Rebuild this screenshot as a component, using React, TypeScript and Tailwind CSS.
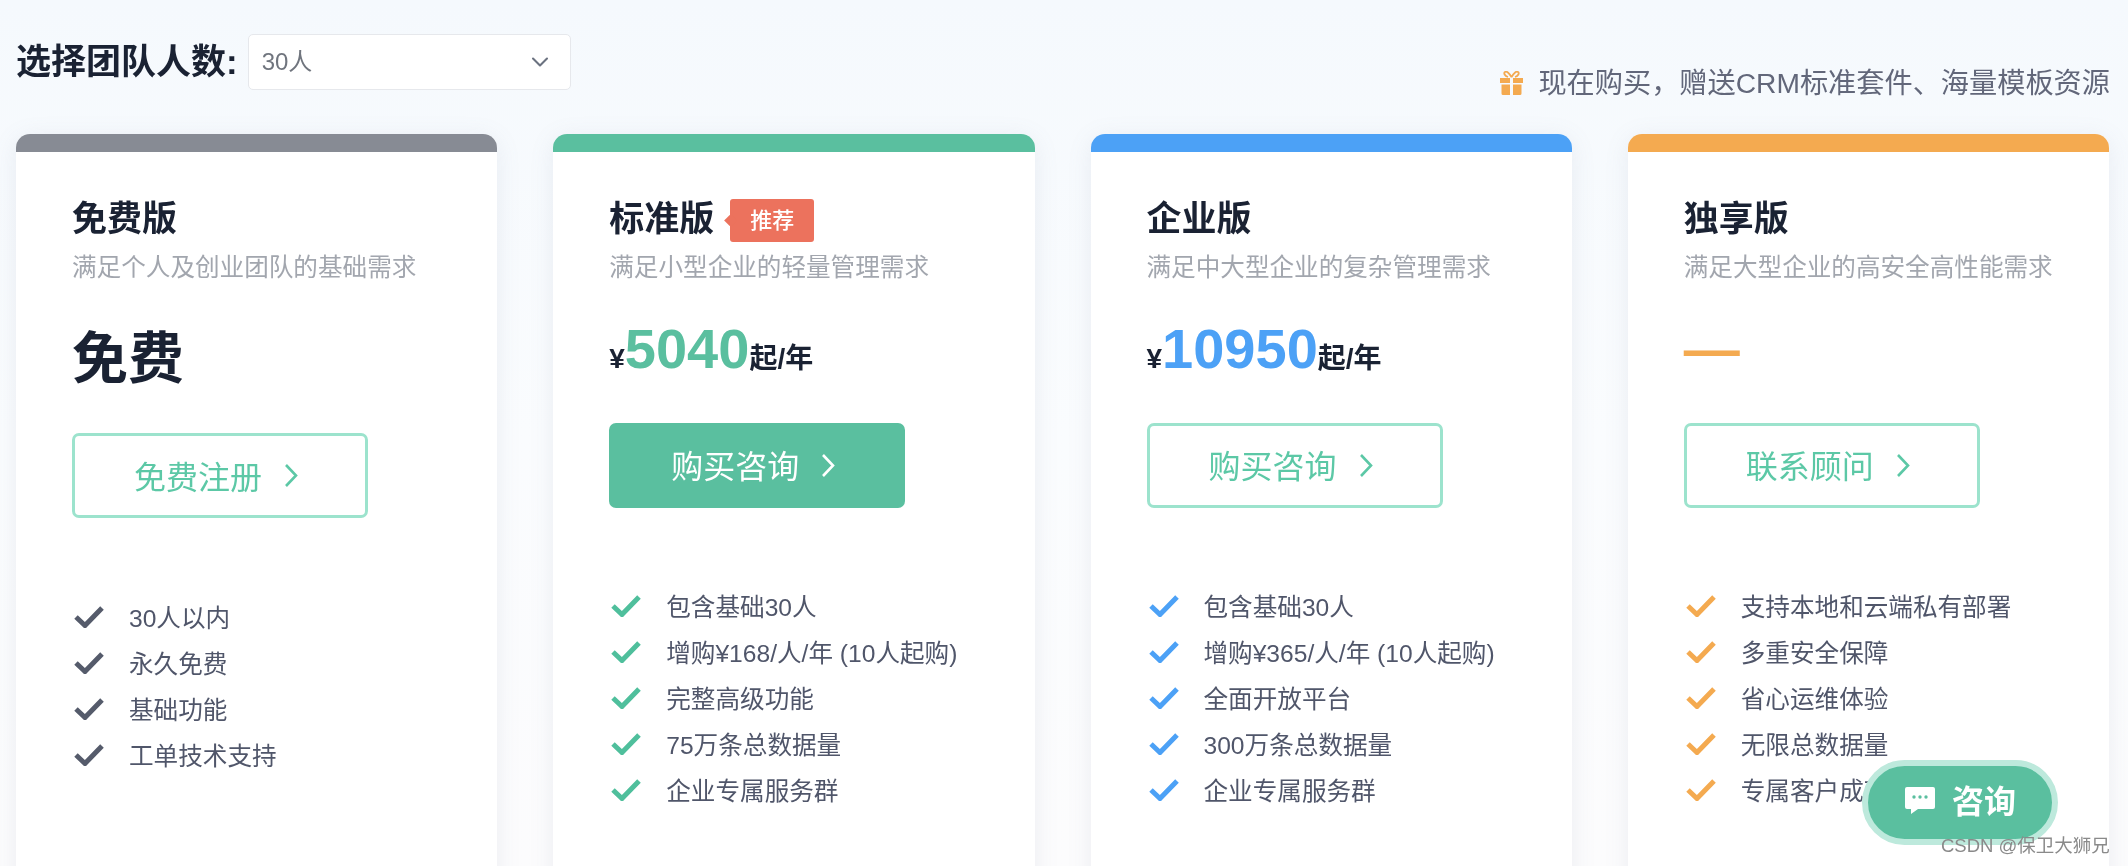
import { ChevronDown } from "lucide-react";

type Plan = {
  name: string;
  desc: string;
  bar: string;
  check: string;
  price: string;
  priceColor?: string;
  action: string;
  solid?: boolean;
  recommend?: boolean;
  items: string[];
};

const plans: Plan[] = [
  {
    name: "免费版",
    desc: "满足个人及创业团队的基础需求",
    bar: "bg-[#878b94]",
    check: "text-[#555b6b]",
    price: "free",
    action: "免费注册",
    items: ["30人以内", "永久免费", "基础功能", "工单技术支持"],
  },
  {
    name: "标准版",
    desc: "满足小型企业的轻量管理需求",
    bar: "bg-[#5abf9f]",
    check: "text-[#4fbf9c]",
    price: "5040",
    priceColor: "text-[#5abf9f]",
    action: "购买咨询",
    solid: true,
    recommend: true,
    items: ["包含基础30人", "增购¥168/人/年 (10人起购)", "完整高级功能", "75万条总数据量", "企业专属服务群"],
  },
  {
    name: "企业版",
    desc: "满足中大型企业的复杂管理需求",
    bar: "bg-[#4ca1f6]",
    check: "text-[#4ca1f6]",
    price: "10950",
    priceColor: "text-[#4ca1f6]",
    action: "购买咨询",
    items: ["包含基础30人", "增购¥365/人/年 (10人起购)", "全面开放平台", "300万条总数据量", "企业专属服务群"],
  },
  {
    name: "独享版",
    desc: "满足大型企业的高安全高性能需求",
    bar: "bg-[#f4aa50]",
    check: "text-[#f4aa50]",
    price: "none",
    action: "联系顾问",
    items: ["支持本地和云端私有部署", "多重安全保障", "省心运维体验", "无限总数据量", "专属客户成功经理"],
  },
];

function CheckMark({ className }: { className: string }) {
  return (
    <svg viewBox="0 0 30 23" className={`w-[30px] h-[23px] shrink-0 -mt-[3px] ${className}`} fill="none">
      <path d="M2 12l9 8.500L28 3" stroke="currentColor" strokeWidth="5" />
    </svg>
  );
}

function Price({ plan }: { plan: Plan }) {
  if (plan.price === "free") {
    return (
      <div className="h-[149px] flex items-center">
        <span className="text-[56px] leading-none font-bold text-[#1a2233]">免费</span>
      </div>
    );
  }
  if (plan.price === "none") {
    return (
      <div className="h-[139px] flex items-center">
        <span className="text-[56px] leading-none font-bold text-[#f4aa50] -mt-[10px]">—</span>
      </div>
    );
  }
  return (
    <div className="h-[139px] flex items-baseline pt-[33px] text-[#1a2233] font-bold">
      <span className="text-[28px] leading-none">¥</span>
      <span className={`text-[56px] leading-[64px] ${plan.priceColor}`}>{plan.price}</span>
      <span className="text-[28px] leading-none">起/年</span>
    </div>
  );
}

function PlanCard({ plan }: { plan: Plan }) {
  const isFree = plan.price === "free";
  return (
    <div className="h-[760px] bg-white rounded-t-[14px] shadow-[0_4px_24px_rgba(120,135,160,0.12)] overflow-hidden">
      <div className={`h-[18px] ${plan.bar}`} />
      <div className="pl-[56px] pt-[45px]">
        <div className="flex items-center h-[44px]">
          <h2 className="text-[35px] leading-[44px] font-bold text-[#1a2233]">{plan.name}</h2>
          {plan.recommend && (
            <span className="relative ml-[16px] mt-[3px] w-[84px] h-[43px] rounded-[3px] bg-[#ec725d] text-white text-[22px] font-medium flex items-center justify-center">
              <span className="absolute -left-[4px] top-[17px] w-[9px] h-[9px] rotate-45 bg-[#ec725d]" />
              <span className="relative">推荐</span>
            </span>
          )}
        </div>
        <p className="mt-[11px] text-[24.6px] leading-[32px] text-[#a2a6ae] whitespace-nowrap">{plan.desc}</p>
        <Price plan={plan} />
        <button
          type="button"
          className={`w-[296px] h-[85px] rounded-[7px] flex items-center justify-center gap-[22px] text-[32px] pr-[8px] ${
            plan.solid
              ? "bg-[#5abf9f] text-white"
              : "bg-white border-[3px] border-[#9ce3cd] text-[#5cc8a6]"
          }`}
        >
          <span className={isFree ? "mt-[5px]" : "mt-[3px]"}>{plan.action}</span>
          <svg viewBox="0 0 14 25" className="w-[14px] h-[25px]" fill="none">
            <path d="M2 2l10 10.500L2 23" stroke="currentColor" strokeWidth="2.600" />
          </svg>
        </button>
        <ul className={isFree ? "mt-[77px]" : "mt-[76px]"}>
          {plan.items.map((item) => (
            <li key={item} className="h-[46px] flex items-center gap-[25px] text-[24.6px] text-[#50566a] pl-[2px]">
              <CheckMark className={plan.check} />
              <span className="whitespace-nowrap mt-[2px]">{item}</span>
            </li>
          ))}
        </ul>
      </div>
    </div>
  );
}

export default function App() {
  return (
    <div className="relative w-[2128px] h-[866px] overflow-hidden bg-gradient-to-b from-[#f5f9fd] via-[#fafcfe] to-[#fcfcfd] blur-[0.5px] font-['Liberation_Sans','Noto_Sans_CJK_SC',sans-serif]">
      <div className="pt-[34px] pl-[16px] pr-[19px]">
        {/* Header */}
        <div className="h-[100px] flex justify-between items-start">
          <div className="flex items-center h-[56px]">
            <span className="text-[35px] font-bold text-[#1a2233] whitespace-nowrap">选择团队人数:</span>
            <div className="ml-[10px] w-[323px] h-[56px] rounded-[5px] border border-[#e6e8ec] bg-white flex items-center justify-between pl-[13px] pr-[16px]">
              <span className="text-[24px] text-[#70757e]">30人</span>
              <ChevronDown size={28} strokeWidth={1.8} className="text-[#6b7280]" />
            </div>
          </div>
          <div className="mt-[29px] -mr-[1px] flex items-center h-[40px] gap-[15px]">
            <svg viewBox="0 0 23 24" className="w-[23px] h-[24px] text-[#f4aa50]" fill="currentColor">
              <path d="M0 7h10v5H0zM13 7h10v5H13zM1.500 13.500H10V24H3a1.500 1.500 0 0 1-1.500-1.500zM13 13.500h8.500v9A1.500 1.500 0 0 1 20 24h-7z" />
              <path d="M11.500 6C9 1.500 6.500 0 5 1s-.5 4 3 5M11.500 6c2.500-4.500 5-6 6.500-5s.5 4-3 5" fill="none" stroke="currentColor" strokeWidth="1.800" />
            </svg>
            <span className="text-[28.2px] leading-[40px] text-[#62677a] whitespace-nowrap">现在购买，赠送CRM标准套件、海量模板资源</span>
          </div>
        </div>

        {/* Plans */}
        <div className="grid grid-cols-4 gap-[56px]">
          {plans.map((plan) => (
            <PlanCard key={plan.name} plan={plan} />
          ))}
        </div>
      </div>

      {/* Floating consult button */}
      <div className="absolute left-[1862px] top-[760px] w-[196px] h-[85px] rounded-full bg-[#5abf9f] border-[6px] border-[#bde9dc] flex items-center justify-center gap-[16px] text-white text-[32px] font-bold">
        <svg viewBox="0 0 32 27" className="w-[32px] h-[27px] -mt-[4px]">
          <path fill="#fff" d="M3 0h26a2 2 0 0 1 2 2v18a2 2 0 0 1-2 2H14l-7 5v-5H3a2 2 0 0 1-2-2V2a2 2 0 0 1 2-2z" />
          <circle cx="10" cy="10" r="1.700" fill="#5abf9f" />
          <circle cx="16" cy="10" r="1.700" fill="#5abf9f" />
          <circle cx="22" cy="10" r="1.700" fill="#5abf9f" />
        </svg>
        <span className="-mt-[2px]">咨询</span>
      </div>

      {/* Watermark */}
      <span className="absolute left-[1941px] top-[835px] text-[18.5px] leading-[22px] text-[#8a8a8a] whitespace-nowrap">CSDN @保卫大狮兄</span>
    </div>
  );
}
